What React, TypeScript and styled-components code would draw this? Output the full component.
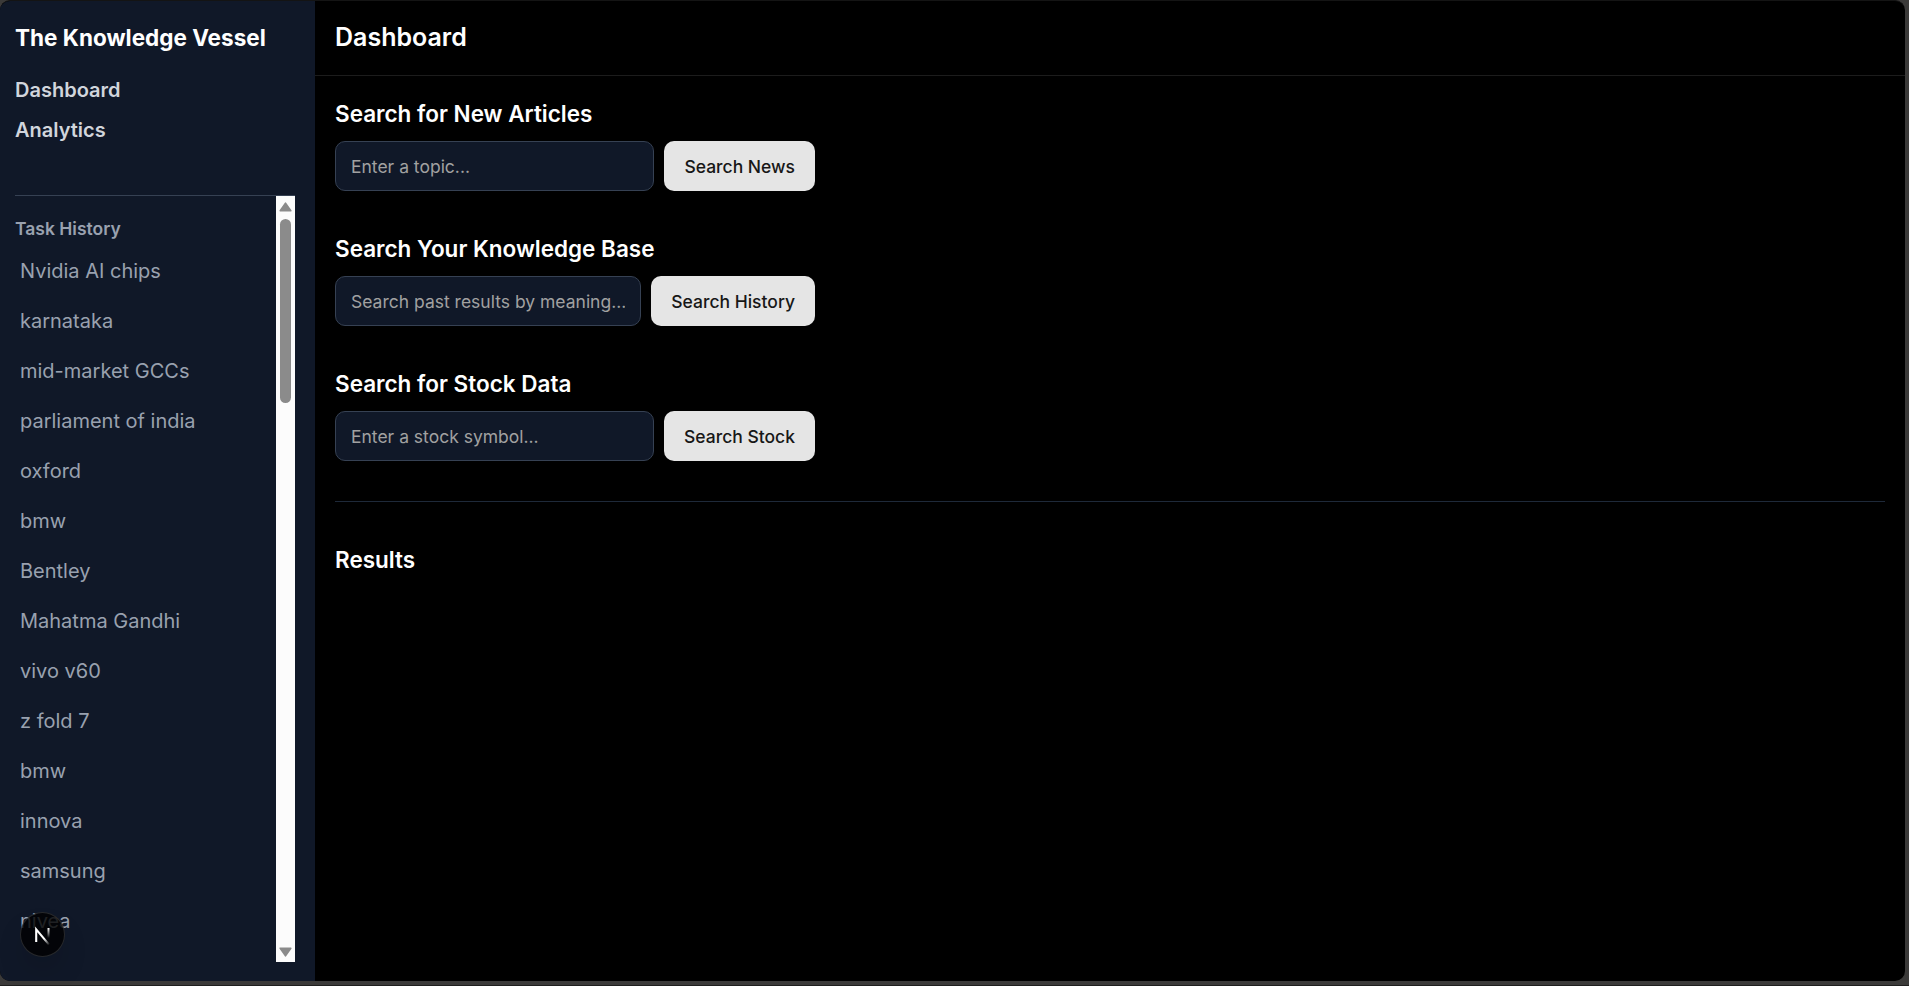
import React from "react";
import styled, { createGlobalStyle } from "styled-components";

const GlobalStyle = createGlobalStyle`
  *, *::before, *::after { box-sizing: border-box; }
  html, body, #root { height: 100%; }
  body {
    margin: 0;
    overflow: hidden;
    background: #3b3a39;
    font-family: Inter, "Liberation Sans", sans-serif;
  }
  h1, h2, p, ul { margin: 0; padding: 0; }
  ul { list-style: none; }
`;

const Frame = styled.div`
  height: 100vh;
  padding: 0 4px 4px 0;
  border-bottom: 1px solid #1f1f1f;
`;

const Shell = styled.div`
  display: flex;
  height: 100%;
  border-top: 1px solid #141414;
  border-radius: 10px;
  overflow: hidden;
  background: #000;
`;

const Sidebar = styled.aside`
  display: flex;
  flex-direction: column;
  flex: none;
  width: 315px;
  padding: 19px 20px 19px 15px;
  background: #101828;
`;

const Brand = styled.h1`
  font-size: 22.5px;
  line-height: 35px;
  font-weight: 700;
  color: #fff;
`;

const Nav = styled.nav`
  display: flex;
  flex-direction: column;
  gap: 10px;
  margin: 20px 0 50px;
`;

const NavLink = styled.a`
  font-size: 20px;
  line-height: 30px;
  font-weight: 600;
  color: #d1d5dc;
`;

const History = styled.section`
  display: flex;
  flex: 1;
  min-height: 0;
  border-top: 1px solid #364153;
`;

const HistoryBody = styled.div`
  flex: 1;
  min-width: 0;
  padding-top: 20px;
  overflow: hidden;
`;

const HistoryTitle = styled.h2`
  margin-bottom: 5px;
  font-size: 17.5px;
  line-height: 25px;
  font-weight: 600;
  color: #99a1af;
`;

const HistoryItem = styled.li`
  padding: 10px 5px;
  font-size: 20px;
  line-height: 30px;
  color: #99a1af;
`;

const Scrollbar = styled.div`
  display: flex;
  flex-direction: column;
  align-items: center;
  width: 19px;
  padding: 6px 0 5px;
  background: #fcfcfc;
`;

const Thumb = styled.div`
  width: 11px;
  height: 184px;
  margin: 7px 0 auto;
  border-radius: 6px;
  background: #8b8b8b;
`;

const Arrow = styled.svg<{ $down?: boolean }>`
  display: block;
  width: 13px;
  height: 10px;
  transform: ${(p) => (p.$down ? "rotate(180deg)" : "none")};
`;

const Main = styled.main`
  flex: 1;
  min-width: 0;
`;

const Header = styled.header`
  height: 75px;
  padding: 19px 20px;
  border-bottom: 1px solid #1c1c1c;
`;

const PageTitle = styled.h1`
  font-size: 25px;
  line-height: 35px;
  font-weight: 600;
  color: #fff;
`;

const Content = styled.div`
  padding: 20px;
`;

const Heading = styled.h2`
  font-size: 22.5px;
  line-height: 35px;
  font-weight: 600;
  color: #fff;
`;

const SearchSection = styled.section`
  margin-bottom: 40px;
`;

const SearchForm = styled.form`
  display: flex;
  gap: 10px;
  width: 480px;
  margin-top: 10px;
`;

const TextInput = styled.input`
  flex: 1;
  min-width: 0;
  height: 50px;
  padding: 0 15px;
  border: 1px solid #364153;
  border-radius: 10px;
  outline: none;
  background: #101828;
  color: #fff;
  font: 400 17.5px Inter, "Liberation Sans", sans-serif;

  &::placeholder { color: #a1a1a1; opacity: 1; }
`;

const Button = styled.button`
  flex: none;
  height: 50px;
  padding: 0 20px;
  border: 0;
  border-radius: 10px;
  background: #e5e5e5;
  color: #171717;
  font: 500 17.5px Inter, "Liberation Sans", sans-serif;
`;

const Divider = styled.div`
  margin-bottom: 40px;
  border-top: 1px solid #1e2939;
`;

const DevBadge = styled.div`
  position: fixed;
  left: 20px;
  bottom: 29px;
  display: flex;
  width: 45px;
  height: 45px;
  border-radius: 50%;
  background: rgba(0, 0, 0, 0.8);
  box-shadow: inset 0 0 0 1px rgba(255, 255, 255, 0.14), 0 16px 32px -8px rgba(0, 0, 0, 0.24);
`;

const searches = [
  { title: "Search for New Articles", placeholder: "Enter a topic...", action: "Search News" },
  { title: "Search Your Knowledge Base", placeholder: "Search past results by meaning...", action: "Search History" },
  { title: "Search for Stock Data", placeholder: "Enter a stock symbol...", action: "Search Stock" },
];

const tasks = [
  "Nvidia AI chips", "karnataka", "mid-market GCCs", "parliament of india", "oxford", "bmw", "Bentley",
  "Mahatma Gandhi", "vivo v60", "z fold 7", "bmw", "innova", "samsung", "nivea",
];

const ScrollArrow = ({ down }: { down?: boolean }) => (
  <Arrow $down={down} viewBox="0 0 13 10">
    <path d="M6.5 1.2 L11.8 8.8 H1.2 Z" fill="#8b8b8b" stroke="#8b8b8b" strokeWidth="1.6" strokeLinejoin="round" />
  </Arrow>
);

const NextMark = () => (
  <svg width="45" height="45" viewBox="0 0 45 45" fill="none">
    <defs>
      <linearGradient id="diagonal" x1="25" y1="26" x2="30" y2="32.5" gradientUnits="userSpaceOnUse">
        <stop stopColor="#fff" />
        <stop offset="1" stopColor="#fff" stopOpacity="0" />
      </linearGradient>
      <linearGradient id="stem" x1="28" y1="16" x2="28" y2="26" gradientUnits="userSpaceOnUse">
        <stop stopColor="#fff" />
        <stop offset="1" stopColor="#fff" stopOpacity="0" />
      </linearGradient>
    </defs>
    <path d="M16.2 30 V17.4 L29 32.6" stroke="url(#diagonal)" strokeWidth="2.1" />
    <path d="M28.5 16 V26" stroke="url(#stem)" strokeWidth="2" />
  </svg>
);

export default function App() {
  return (
    <Frame>
      <GlobalStyle />
      <Shell>
        <Sidebar>
          <Brand>The Knowledge Vessel</Brand>
          <Nav>
            <NavLink>Dashboard</NavLink>
            <NavLink>Analytics</NavLink>
          </Nav>
          <History>
            <HistoryBody>
              <HistoryTitle>Task History</HistoryTitle>
              <ul>
                {tasks.map((task, i) => (
                  <HistoryItem key={i}>{task}</HistoryItem>
                ))}
              </ul>
            </HistoryBody>
            <Scrollbar>
              <ScrollArrow />
              <Thumb />
              <ScrollArrow down />
            </Scrollbar>
          </History>
        </Sidebar>
        <Main>
          <Header>
            <PageTitle>Dashboard</PageTitle>
          </Header>
          <Content>
            {searches.map((s) => (
              <SearchSection key={s.title}>
                <Heading>{s.title}</Heading>
                <SearchForm>
                  <TextInput placeholder={s.placeholder} />
                  <Button type="button">{s.action}</Button>
                </SearchForm>
              </SearchSection>
            ))}
            <Divider />
            <Heading>Results</Heading>
          </Content>
        </Main>
      </Shell>
      <DevBadge>
        <NextMark />
      </DevBadge>
    </Frame>
  );
}
